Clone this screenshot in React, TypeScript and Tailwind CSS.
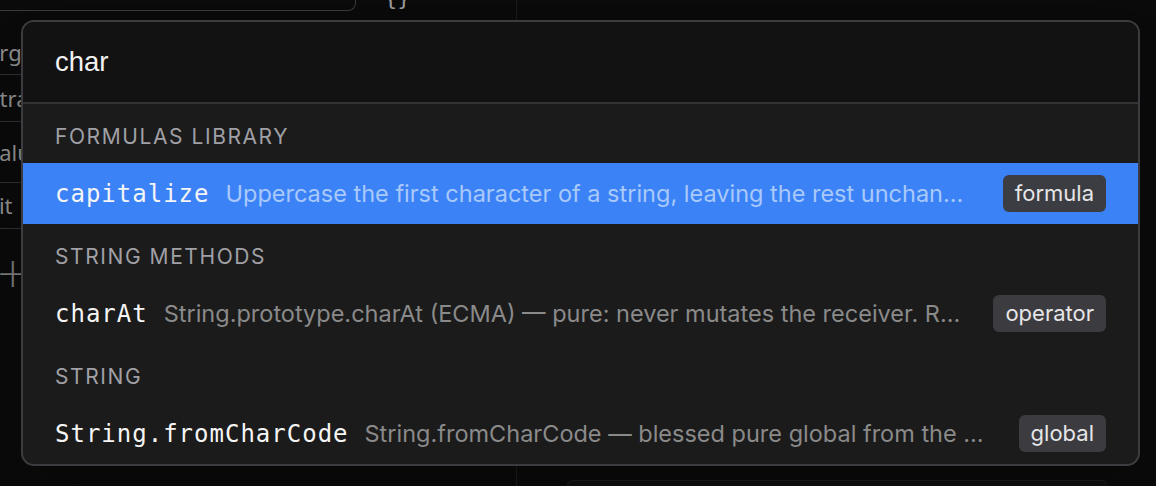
import React from 'react';

const sections = [
  {
    title: 'Formulas Library',
    items: [
      {
        name: 'capitalize',
        desc: 'Uppercase the first character of a string, leaving the rest unchan...',
        kind: 'formula',
        active: true,
      },
    ],
  },
  {
    title: 'String Methods',
    items: [
      {
        name: 'charAt',
        desc: 'String.prototype.charAt (ECMA) — pure: never mutates the receiver. R...',
        kind: 'operator',
        active: false,
      },
    ],
  },
  {
    title: 'String',
    items: [
      {
        name: 'String.fromCharCode',
        desc: 'String.fromCharCode — blessed pure global from the ...',
        kind: 'global',
        active: false,
      },
    ],
  },
];

function Background() {
  return (
    <div className="h-[486px] w-full bg-[#0a0a0a] flex">
      {/* Left panel */}
      <div className="w-[517px] h-full border-r border-[#1a1a1a] flex flex-col">
        <div className="flex items-start h-[11px]">
          <div className="w-[356px] h-[11px] border-b border-r border-[#3a3a3e] rounded-br-lg" />
          <div className="ml-7 -mt-[19px] text-[22px] text-[#9a9a9a] font-['DejaVu_Sans_Mono']">{'{}'}</div>
        </div>
        <div className="w-[21px] flex flex-col text-[22px] text-[#8a8a8a] font-['Noto_Sans'] overflow-hidden mt-[19px]">
          <div className="h-[45px] border-b border-[#2e2e30] flex items-center whitespace-nowrap -ml-[13px]">arg</div>
          <div className="h-[47px] border-b border-[#2e2e30] flex items-center whitespace-nowrap -ml-[24px] pl-0">extra</div>
          <div className="h-[61px] border-b border-[#2e2e30] flex items-center whitespace-nowrap -ml-[12px]">value</div>
          <div className="h-[46px] border-b border-[#2e2e30] flex items-center whitespace-nowrap -ml-[27px]">edit</div>
          <div className="h-[88px] flex items-center text-[40px] text-[#777] -ml-[4px] font-extralight font-['DejaVu_Sans']">+</div>
        </div>
      </div>
      <div className="flex-1 flex flex-col justify-end">
        <div className="ml-[50px] mr-[49px] h-[6px] border-t border-l border-r border-[#1c1c1e] rounded-t-lg bg-[#0e0e0e]" />
      </div>
    </div>
  );
}

function Palette() {
  return (
    <div className="absolute left-[21px] top-[20px] w-[1119px] h-[446px] rounded-[13px] border-2 border-[#3c3c40] bg-[#1b1b1b] overflow-hidden flex flex-col shadow-2xl">
      <div className="h-[82px] shrink-0 bg-[#121212] border-b-2 border-[#333336] flex items-center px-8">
        <span className="text-[27.5px] text-[#f2f2f2] font-['Liberation_Sans',sans-serif]">char</span>
      </div>
      <div className="flex flex-col">
        {sections.map((section) => (
          <div key={section.title} className="flex flex-col">
            <div className="h-[59px] flex items-center px-8 pt-[6px] uppercase tracking-[0.075em] text-[21px] text-[#a0a0a6] font-['Inter',sans-serif]">
              {section.title}
            </div>
            {section.items.map((item) => (
              <div
                key={item.name}
                className={
                  'h-[61px] flex items-center px-8 gap-4 ' + (item.active ? 'bg-[#3b82f6]' : '')
                }
              >
                <span className="shrink-0 text-[24px] tracking-[1px] text-[#f5f5f5] font-['DejaVu_Sans_Mono',monospace]">
                  {item.name}
                </span>
                <span
                  className={
                    'flex-1 min-w-0 truncate text-[23.5px] font-["Inter",sans-serif] ' +
                    (item.active ? 'text-[#a9c9fb]' : 'text-[#8a8a8a]')
                  }
                >
                  {item.desc}
                </span>
                <span
                  className={
                    'shrink-0 ml-1 h-[37px] px-3 rounded-md flex items-center text-[22px] text-[#e6e6e8] font-["Inter",sans-serif] ' +
                    (item.active ? 'bg-[#3c3d42]' : 'bg-[#3c3c40]')
                  }
                >
                  {item.kind}
                </span>
              </div>
            ))}
          </div>
        ))}
      </div>
    </div>
  );
}

export default function App() {
  return (
    <div className="relative w-[1156px] h-[486px] overflow-hidden">
      <Background />
      <Palette />
    </div>
  );
}
